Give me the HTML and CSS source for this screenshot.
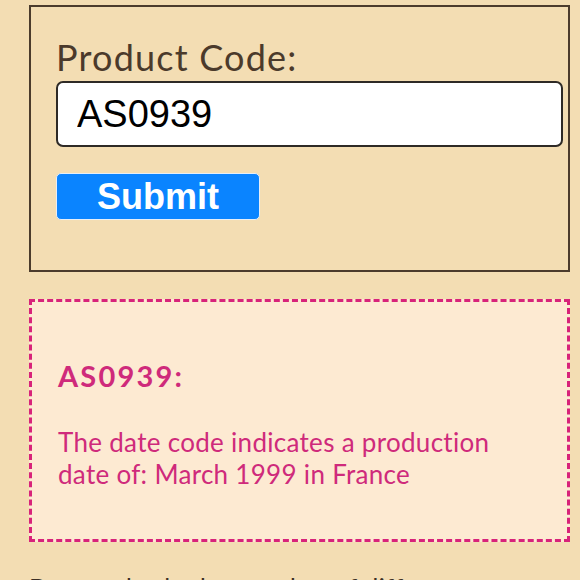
FILE: index.html
```html
<!DOCTYPE html>
<html lang="en">
<head>
<meta charset="utf-8">
<title>Date Code Lookup</title>
<link rel="stylesheet" href="styles.css">
</head>
<body>
<main class="page">
  <form class="lookup">
    <label class="lookup-label" for="code">Product Code:</label>
    <input class="lookup-input" id="code" type="text" value="AS0939">
    <button class="lookup-submit" type="button">Submit</button>
  </form>
  <section class="result">
    <h2 class="result-title">AS0939:</h2>
    <p class="result-text">The date code indicates a production date of: March 1999 in France</p>
  </section>
  <p class="info">Date codes look a number of different ways on the</p>
</main>
</body>
</html>
```

FILE: styles.css
```css
html, body {
  margin: 0;
  padding: 0;
  background: #f3ddb3;
  overflow: hidden;
}
.page {
  padding: 5px 10px 0 29px;
  font-family: Lato, "Noto Sans", sans-serif;
}
.lookup {
  display: flex;
  flex-direction: column;
  align-items: flex-start;
  border: 2px solid #4b3b2c;
  padding: 30px 5px 50px 25px;
}
.lookup-label {
  font-size: 36px;
  line-height: 40px;
  letter-spacing: 1.2px;
  color: #4b3a2b;
}
.lookup-input {
  box-sizing: border-box;
  width: 100%;
  height: 66px;
  margin-top: 4px;
  border: 2px solid #2e2a26;
  border-radius: 7px;
  background: #fff;
  padding: 0 19px;
  font-family: "Liberation Sans", Arial, sans-serif;
  font-size: 38px;
  color: #000;
}
.lookup-submit {
  box-sizing: border-box;
  height: 47px;
  margin-top: 26px;
  padding: 0 40px;
  border: 1px solid #e6eef8;
  border-radius: 5px;
  background: #0a84ff;
  color: #fff;
  font-family: "Liberation Sans", Arial, sans-serif;
  font-weight: bold;
  font-size: 36px;
  line-height: 44px;
}
.result {
  margin-top: 27px;
  border: 3px dashed #d8237a;
  background: #fdead2;
  padding: 57px 26px 49px 26px;
  color: #cf2a7b;
}
.result-title {
  margin: 0;
  font-size: 29px;
  line-height: 34px;
  font-weight: 700;
  letter-spacing: 2.2px;
}
.result-text {
  margin: 33px 0 0;
  font-size: 26px;
  line-height: 32px;
  letter-spacing: 0.3px;
}
.info {
  margin: 29px 0 0;
  font-size: 25px;
  line-height: 32px;
  letter-spacing: 0.5px;
  color: #3b2f25;
  white-space: nowrap;
}
```
